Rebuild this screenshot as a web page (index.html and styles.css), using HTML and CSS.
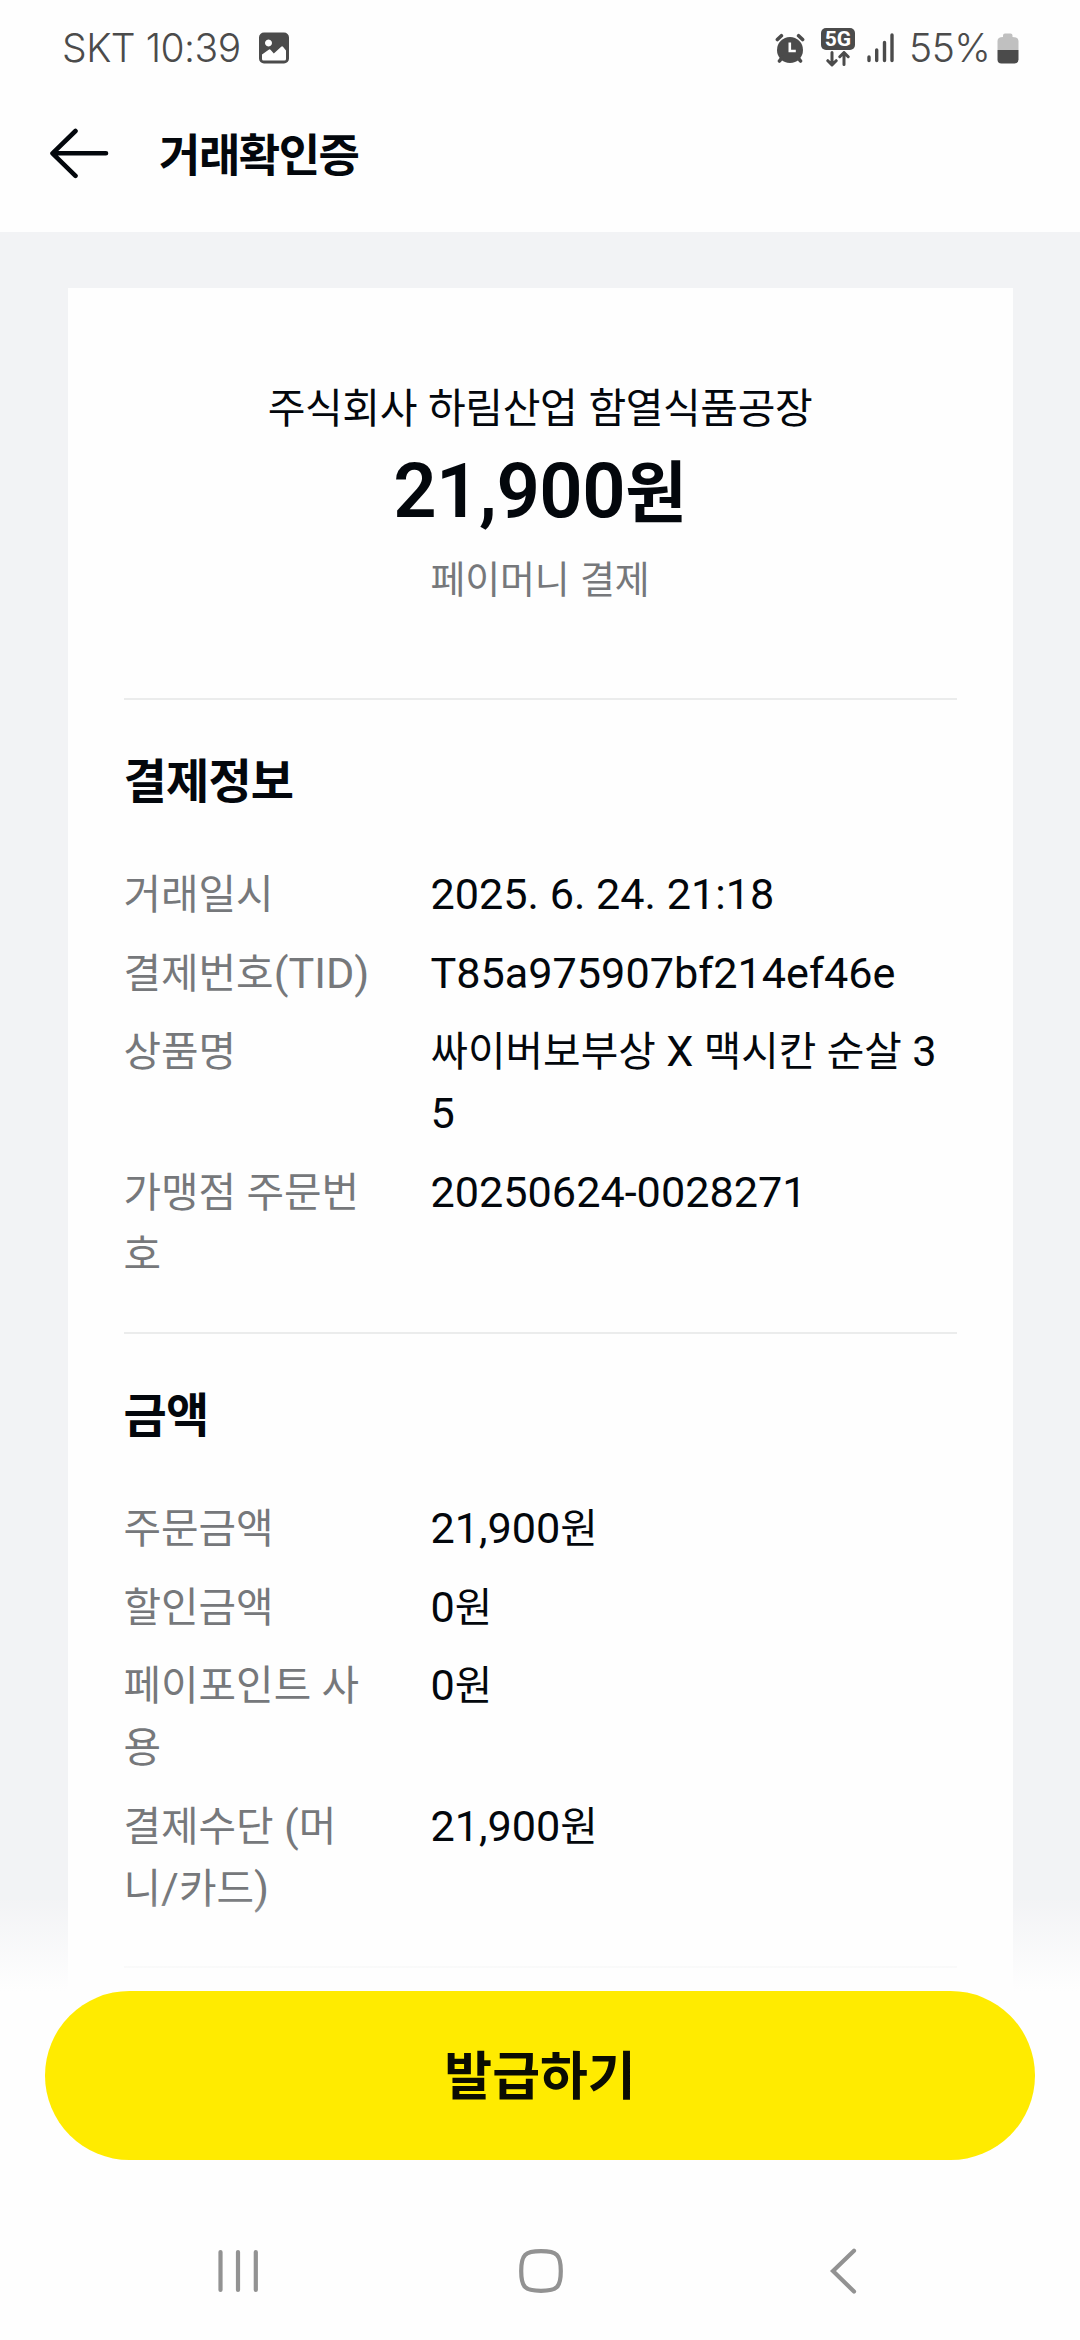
FILE: index.html
```html
<!DOCTYPE html>
<html lang="ko">
<head>
<meta charset="utf-8">
<title>거래확인증</title>
<link rel="stylesheet" href="styles.css">
</head>
<body>
<div class="screen">
  <div class="status">
    <span class="status-text clock">SKT 10:39</span>
    <svg class="ic-image" width="32" height="32" viewBox="0 0 32 32">
      <path fill="#4b4b4b" fill-rule="evenodd" d="M6 0.5h20a5 5 0 0 1 5 5v21a5 5 0 0 1-5 5H6a5 5 0 0 1-5-5v-21a5 5 0 0 1 5-5zM10.500 7.500a3.500 3.500 0 1 0 0.010 0zM4 22.500v4.500q0 1.500 1.500 1.500h21q1.500 0 1.500-1.500v-8.500l-3-3.800q-0.900-1-1.800 0l-7.400 6.700l-3.300-3.600q-0.900-0.900-1.800 0z"/>
    </svg>
    <div class="status-right">
      <svg class="ic-alarm" width="30" height="31" viewBox="0 0 30 31">
        <circle cx="15" cy="17" r="13" fill="#4b4b4b"/>
        <g fill="none" stroke="#4b4b4b" stroke-width="3.600" stroke-linecap="round">
          <path d="M2.400 6.500l4-3.800M27.600 6.500l-4-3.800M4.500 28l3-4M25.500 28l-3-4"/>
        </g>
        <path d="M14.800 9.500v8.500h6" fill="none" stroke="#fff" stroke-width="2.600"/>
      </svg>
      <div class="network">
        <span class="badge">5G</span>
        <svg width="24" height="16" viewBox="0 0 24 16" fill="none" stroke="#4b4b4b" stroke-width="3" stroke-linecap="round" stroke-linejoin="round">
          <path d="M6 1.500v12M1.800 9.700l4.200 4.200l4.200-4.200M18 13.500V2M13.800 5.700L18 1.500l4.200 4.200"/>
        </svg>
      </div>
      <svg class="ic-signal" width="27" height="30" viewBox="0 0 27 30" stroke="#4b4b4b" stroke-width="3.400" stroke-linecap="round">
        <path d="M2 24v3.500M9.700 17v10.500M17.500 9.500v18M25 2v25.500"/>
      </svg>
      <span class="status-text percent">55%</span>
      <svg class="ic-battery" width="22" height="31" viewBox="0 0 22 31">
        <path fill="#c0c0c0" d="M0.500 17V8q0-4 5.500-4V2.500q0-2 2-2h5.500q2 0 2 2V4q6 0 6 4v9z"/>
        <path fill="#4b4b4b" d="M0.500 17h21v9.500q0 4-4 4h-13q-4 0-4-4z"/>
      </svg>
    </div>
  </div>

  <header class="header">
    <svg width="60" height="52" viewBox="0 0 60 52" fill="none" stroke="#03070c" stroke-width="4.600" stroke-linecap="round" stroke-linejoin="round">
      <path d="M26.500 3L3.500 25.300l23 22.500M4 25.300h53"/>
    </svg>
    <h1 class="title">거래확인증</h1>
  </header>

  <main class="body">
    <article class="card">
      <section class="summary">
        <div class="company">주식회사 하림산업 함열식품공장</div>
        <div class="amount"><span class="amount-num">21,900</span>원</div>
        <div class="method">페이머니 결제</div>
      </section>

      <section class="section">
        <h2 class="section-title">결제정보</h2>
        <dl class="rows">
          <dt>거래일시</dt><dd><span class="num">2025. 6. 24. 21:18</span></dd>
          <dt>결제번호<span class="num">(TID)</span></dt><dd><span class="num">T85a975907bf214ef46e</span></dd>
          <dt>상품명</dt><dd>싸이버보부상 <span class="num">X</span> 맥시칸 순살 <span class="num">3<br>5</span></dd>
          <dt>가맹점 주문번<br>호</dt><dd><span class="num">20250624-0028271</span></dd>
        </dl>
      </section>

      <section class="section">
        <h2 class="section-title">금액</h2>
        <dl class="rows">
          <dt>주문금액</dt><dd><span class="num">21,900</span>원</dd>
          <dt>할인금액</dt><dd><span class="num">0</span>원</dd>
          <dt>페이포인트 사<br>용</dt><dd><span class="num">0</span>원</dd>
          <dt>결제수단 <span class="num">(</span>머<br>니<span class="num">/</span>카드<span class="num">)</span></dt><dd><span class="num">21,900</span>원</dd>
        </dl>
      </section>
      <section class="section"></section>
    </article>
    <div class="fade"></div>
  </main>

  <footer class="footer">
    <button class="cta" type="button">발급하기</button>
  </footer>

  <nav class="nav">
    <svg width="46" height="50" viewBox="0 0 46 50" fill="none" stroke="#929292" stroke-width="4.200" stroke-linecap="round">
      <path d="M5.500 6v38M23 6v38M40.800 6v38"/>
    </svg>
    <svg width="46" height="50" viewBox="0 0 46 50" fill="none" stroke="#929292" stroke-width="4.200">
      <path d="M23 5.200C39 5.200 42.800 8.500 42.800 25S39 44.800 23 44.800S3.200 41.500 3.200 25S7 5.200 23 5.200z"/>
    </svg>
    <svg width="46" height="50" viewBox="0 0 46 50" fill="none" stroke="#929292" stroke-width="4.200" stroke-linecap="round" stroke-linejoin="miter">
      <path d="M33 4.800L12 25l21 20.500"/>
    </svg>
  </nav>
</div>
</body>
</html>
```

FILE: styles.css
```css
* { box-sizing: border-box; }
body {
  margin: 0;
  background: #fefefe;
  color: #03070c;
  font-family: "Noto Sans CJK KR", "Noto Sans", sans-serif;
}
.screen {
  width: 1080px;
  height: 2340px;
  display: flex;
  flex-direction: column;
  overflow: hidden;
}

/* Status bar */
.status {
  height: 96px;
  flex: none;
  display: flex;
  align-items: center;
  padding: 0 61px 0 62px;
  color: #4b4b4b;
}
.status-text {
  font-family: Inter, "Liberation Sans", sans-serif;
  font-weight: 350;
  font-size: 39px;
  line-height: 48px;
  white-space: nowrap;
}
.clock { width: 180px; letter-spacing: -0.500px; }
.ic-image { margin-left: 16px; }
.status-right {
  margin-left: auto;
  display: flex;
  align-items: center;
}
.network {
  width: 34px;
  height: 40px;
  margin: 0 12px 0 16px;
  display: flex;
  flex-direction: column;
  align-items: center;
}
.badge {
  width: 34px;
  height: 22px;
  flex: none;
  border-radius: 5px;
  background: #4b4b4b;
  color: #fff;
  font: 700 21px/22px Roboto, sans-serif;
  text-align: center;
}
.network svg { margin-top: 1px; }
.percent { width: 80px; margin-left: 15px; letter-spacing: -0.500px; }
.ic-battery { margin-left: 8px; }

/* App header */
.header {
  height: 136px;
  flex: none;
  display: flex;
  align-items: center;
  padding: 0 0 21px 49px;
}
.title {
  margin: 0 0 2px 50px;
  font-size: 45px;
  font-weight: 700;
  line-height: 60px;
  letter-spacing: -1.500px;
}

/* Receipt */
.body {
  position: relative;
  height: 1759px;
  flex: none;
  background: #f2f3f5;
  padding: 56px 67.500px 0;
  overflow: hidden;
}
.card {
  height: 1800px;
  padding: 82px 56px 0;
  background: #fefefe;
}
.summary {
  height: 328px;
  text-align: center;
}
.company { font-size: 41px; line-height: 70px; letter-spacing: -0.400px; }
.amount {
  margin-top: -2px;
  font-size: 67px;
  font-weight: 700;
  line-height: 100px;
  height: 100px;
}
.amount-num {
  font-family: Roboto, sans-serif;
  font-size: 76px;
  font-weight: 600;
  letter-spacing: -0.500px;
}
.method {
  margin-top: 9px;
  color: #76787b;
  font-size: 38px;
  line-height: 60px;
  letter-spacing: -0.200px;
}
.section {
  border-top: 2px solid #ebecec;
  padding-top: 43px;
  padding-bottom: 49px;
}
.section-title {
  margin: 0 0 48px;
  font-size: 47px;
  font-weight: 700;
  line-height: 70px;
  letter-spacing: -0.800px;
}
.rows {
  margin: 0;
  display: grid;
  grid-template-columns: 307px 1fr;
  row-gap: 16.700px;
  font-size: 40.800px;
  line-height: 62px;
  white-space: nowrap;
  word-spacing: -1px;
}
.rows dt { color: #76787b; }
.rows dd { margin: 0; }
.num {
  font-family: Roboto, sans-serif;
  font-size: 43.200px;
  line-height: 1;
  word-spacing: 0;
}
.fade {
  position: absolute;
  left: 0;
  right: 0;
  bottom: 0;
  height: 95px;
  background: linear-gradient(rgba(254, 254, 254, 0), #fefefe);
}

/* Bottom action */
.footer { padding: 0 45px; flex: none; }
.cta {
  display: block;
  width: 100%;
  height: 169px;
  border: 0;
  border-radius: 85px;
  padding: 0 0 6px;
  background: #ffeb00;
  color: #0b0c02;
  font: 700 52px/1 "Noto Sans CJK KR", sans-serif;
}

/* System navigation */
.nav {
  margin-top: 86px;
  display: flex;
  justify-content: space-between;
  padding: 0 213px 0 215px;
}
```
